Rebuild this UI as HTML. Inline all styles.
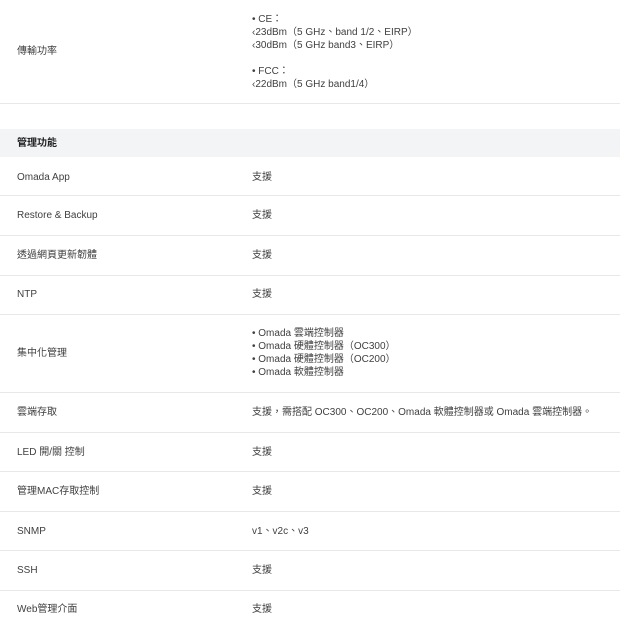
<!DOCTYPE html>
<html><head><meta charset="utf-8"><style>
body{margin:0;width:620px;height:620px;overflow:hidden;background:#fff;font-family:"Liberation Sans","Noto Sans CJK TC",sans-serif;font-size:10px;color:#404040;position:relative}
.t{position:absolute;white-space:nowrap;line-height:13px;margin-top:1px}
.l{left:17px}.v{left:252px}
.b{position:absolute;left:0;width:620px;height:1px;background:#e8e8e8}
.h{position:absolute;left:0;top:129px;width:620px;height:28px;background:#f3f4f6}
</style></head><body>
<div class="t l" style="top:44px">傳輸功率</div>
<div class="t v" style="top:12px">• CE：<br>‹23dBm（5 GHz、band 1/2、EIRP）<br>‹30dBm（5 GHz band3、EIRP）</div>
<div class="t v" style="top:64px">• FCC：<br>‹22dBm（5 GHz band1/4）</div>
<div class="b" style="top:103px"></div>
<div class="h"></div>
<div class="t l" style="top:136px;font-weight:bold;color:#222">管理功能</div>
<div class="t l" style="top:170px">Omada App</div><div class="t v" style="top:170px">支援</div>
<div class="b" style="top:195px"></div>
<div class="t l" style="top:208px">Restore &amp; Backup</div><div class="t v" style="top:208px">支援</div>
<div class="b" style="top:235px"></div>
<div class="t l" style="top:248px">透過網頁更新韌體</div><div class="t v" style="top:248px">支援</div>
<div class="b" style="top:275px"></div>
<div class="t l" style="top:287px">NTP</div><div class="t v" style="top:287px">支援</div>
<div class="b" style="top:314px"></div>
<div class="t l" style="top:346px">集中化管理</div>
<div class="t v" style="top:326px">• Omada 雲端控制器<br>• Omada 硬體控制器（OC300）<br>• Omada 硬體控制器（OC200）<br>• Omada 軟體控制器</div>
<div class="b" style="top:392px"></div>
<div class="t l" style="top:405px">雲端存取</div><div class="t v" style="top:405px">支援，需搭配 OC300、OC200、Omada 軟體控制器或 Omada 雲端控制器。</div>
<div class="b" style="top:432px"></div>
<div class="t l" style="top:445px">LED 開/關 控制</div><div class="t v" style="top:445px">支援</div>
<div class="b" style="top:471px"></div>
<div class="t l" style="top:484px">管理MAC存取控制</div><div class="t v" style="top:484px">支援</div>
<div class="b" style="top:511px"></div>
<div class="t l" style="top:524px">SNMP</div><div class="t v" style="top:524px">v1、v2c、v3</div>
<div class="b" style="top:550px"></div>
<div class="t l" style="top:563px">SSH</div><div class="t v" style="top:563px">支援</div>
<div class="b" style="top:590px"></div>
<div class="t l" style="top:602px">Web管理介面</div><div class="t v" style="top:602px">支援</div>
</body></html>
